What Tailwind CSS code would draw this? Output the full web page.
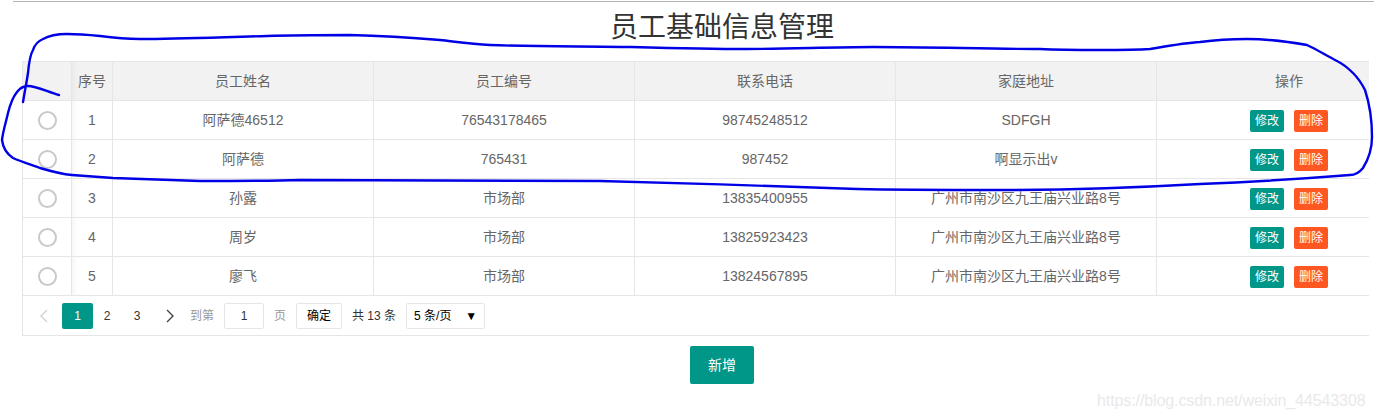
<!DOCTYPE html>
<html lang="zh-CN">
<head>
<meta charset="utf-8">
<title>员工基础信息管理</title>
<script src="https://cdn.jsdelivr.net/npm/@tailwindcss/browser@4"></script>
</head>
<body class="bg-white overflow-hidden font-['Liberation_Sans','Noto_Sans_CJK_SC',sans-serif] text-[14px] text-[#666]">
<div class="relative h-[419px] w-[1374px] overflow-hidden">
  <div class="w-[1444px]">
    <div class="mt-px ml-[13px] h-px bg-[#b4b4b4]"></div>
    <h1 class="h-[59px] pt-[8px] text-center text-[28px] leading-[36px] font-normal text-[#333]">员工基础信息管理</h1>

    <div class="ml-[22px] w-[1347px] border-l border-t border-[#e6e6e6]">
      <!-- head -->
      <div class="grid h-[39px] grid-cols-[49px_41px_261px_261px_261px_261px_212px] border-b border-[#e6e6e6] bg-[#f2f2f2]">
        <div class="border-r border-[#e6e6e6]"></div>
        <div class="flex items-center justify-center border-r border-[#e6e6e6] shadow-[inset_6px_0_6px_-5px_rgba(0,0,0,0.06)]">序号</div>
        <div class="flex items-center justify-center border-r border-[#e6e6e6]">员工姓名</div>
        <div class="flex items-center justify-center border-r border-[#e6e6e6]">员工编号</div>
        <div class="flex items-center justify-center border-r border-[#e6e6e6]">联系电话</div>
        <div class="flex items-center justify-center border-r border-[#e6e6e6]">家庭地址</div>
        <div class="flex items-center justify-center pl-[52px]">操作</div>
      </div>

      <!-- rows -->
      <div class="grid h-[39px] grid-cols-[49px_41px_261px_261px_261px_261px_212px] border-b border-[#e6e6e6]">
        <div class="flex items-center justify-center border-r border-[#e6e6e6] pt-px"><span class="size-[19px] rounded-full border-2 border-[#c9c9c9]"></span></div>
        <div class="flex items-center justify-center border-r border-[#e6e6e6] shadow-[inset_6px_0_6px_-5px_rgba(0,0,0,0.06)]">1</div>
        <div class="flex items-center justify-center border-r border-[#e6e6e6]">阿萨德46512</div>
        <div class="flex items-center justify-center border-r border-[#e6e6e6]">76543178465</div>
        <div class="flex items-center justify-center border-r border-[#e6e6e6]">98745248512</div>
        <div class="flex items-center justify-center border-r border-[#e6e6e6]">SDFGH</div>
        <div class="flex items-center gap-[10px] pl-[93px] pt-[2px]"><span class="flex h-[22px] w-[34px] items-center justify-center rounded-[2px] bg-[#009688] text-[12px] text-white">修改</span><span class="flex h-[22px] w-[34px] items-center justify-center rounded-[2px] bg-[#ff5722] text-[12px] text-white">删除</span></div>
      </div>
      <div class="grid h-[39px] grid-cols-[49px_41px_261px_261px_261px_261px_212px] border-b border-[#e6e6e6]">
        <div class="flex items-center justify-center border-r border-[#e6e6e6] pt-px"><span class="size-[19px] rounded-full border-2 border-[#c9c9c9]"></span></div>
        <div class="flex items-center justify-center border-r border-[#e6e6e6] shadow-[inset_6px_0_6px_-5px_rgba(0,0,0,0.06)]">2</div>
        <div class="flex items-center justify-center border-r border-[#e6e6e6]">阿萨德</div>
        <div class="flex items-center justify-center border-r border-[#e6e6e6]">765431</div>
        <div class="flex items-center justify-center border-r border-[#e6e6e6]">987452</div>
        <div class="flex items-center justify-center border-r border-[#e6e6e6]">啊显示出v</div>
        <div class="flex items-center gap-[10px] pl-[93px] pt-[2px]"><span class="flex h-[22px] w-[34px] items-center justify-center rounded-[2px] bg-[#009688] text-[12px] text-white">修改</span><span class="flex h-[22px] w-[34px] items-center justify-center rounded-[2px] bg-[#ff5722] text-[12px] text-white">删除</span></div>
      </div>
      <div class="grid h-[39px] grid-cols-[49px_41px_261px_261px_261px_261px_212px] border-b border-[#e6e6e6]">
        <div class="flex items-center justify-center border-r border-[#e6e6e6] pt-px"><span class="size-[19px] rounded-full border-2 border-[#c9c9c9]"></span></div>
        <div class="flex items-center justify-center border-r border-[#e6e6e6] shadow-[inset_6px_0_6px_-5px_rgba(0,0,0,0.06)]">3</div>
        <div class="flex items-center justify-center border-r border-[#e6e6e6]">孙露</div>
        <div class="flex items-center justify-center border-r border-[#e6e6e6]">市场部</div>
        <div class="flex items-center justify-center border-r border-[#e6e6e6]">13835400955</div>
        <div class="flex items-center justify-center border-r border-[#e6e6e6]">广州市南沙区九王庙兴业路8号</div>
        <div class="flex items-center gap-[10px] pl-[93px] pt-[2px]"><span class="flex h-[22px] w-[34px] items-center justify-center rounded-[2px] bg-[#009688] text-[12px] text-white">修改</span><span class="flex h-[22px] w-[34px] items-center justify-center rounded-[2px] bg-[#ff5722] text-[12px] text-white">删除</span></div>
      </div>
      <div class="grid h-[39px] grid-cols-[49px_41px_261px_261px_261px_261px_212px] border-b border-[#e6e6e6]">
        <div class="flex items-center justify-center border-r border-[#e6e6e6] pt-px"><span class="size-[19px] rounded-full border-2 border-[#c9c9c9]"></span></div>
        <div class="flex items-center justify-center border-r border-[#e6e6e6] shadow-[inset_6px_0_6px_-5px_rgba(0,0,0,0.06)]">4</div>
        <div class="flex items-center justify-center border-r border-[#e6e6e6]">周岁</div>
        <div class="flex items-center justify-center border-r border-[#e6e6e6]">市场部</div>
        <div class="flex items-center justify-center border-r border-[#e6e6e6]">13825923423</div>
        <div class="flex items-center justify-center border-r border-[#e6e6e6]">广州市南沙区九王庙兴业路8号</div>
        <div class="flex items-center gap-[10px] pl-[93px] pt-[2px]"><span class="flex h-[22px] w-[34px] items-center justify-center rounded-[2px] bg-[#009688] text-[12px] text-white">修改</span><span class="flex h-[22px] w-[34px] items-center justify-center rounded-[2px] bg-[#ff5722] text-[12px] text-white">删除</span></div>
      </div>
      <div class="grid h-[39px] grid-cols-[49px_41px_261px_261px_261px_261px_212px] border-b border-[#e6e6e6]">
        <div class="flex items-center justify-center border-r border-[#e6e6e6] pt-px"><span class="size-[19px] rounded-full border-2 border-[#c9c9c9]"></span></div>
        <div class="flex items-center justify-center border-r border-[#e6e6e6] shadow-[inset_6px_0_6px_-5px_rgba(0,0,0,0.06)]">5</div>
        <div class="flex items-center justify-center border-r border-[#e6e6e6]">廖飞</div>
        <div class="flex items-center justify-center border-r border-[#e6e6e6]">市场部</div>
        <div class="flex items-center justify-center border-r border-[#e6e6e6]">13824567895</div>
        <div class="flex items-center justify-center border-r border-[#e6e6e6]">广州市南沙区九王庙兴业路8号</div>
        <div class="flex items-center gap-[10px] pl-[93px] pt-[2px]"><span class="flex h-[22px] w-[34px] items-center justify-center rounded-[2px] bg-[#009688] text-[12px] text-white">修改</span><span class="flex h-[22px] w-[34px] items-center justify-center rounded-[2px] bg-[#ff5722] text-[12px] text-white">删除</span></div>
      </div>

      <!-- pager -->
      <div class="flex h-[40px] items-center border-b border-[#e6e6e6] pl-[15px] pt-px text-[12px] text-[#333]">
        <svg class="w-[12px] h-[14px] mr-[12px]" viewBox="0 0 12 14" fill="none" stroke="#d2d2d2" stroke-width="1.4"><path d="M9 1 3 7l6 6"/></svg>
        <span class="flex h-[26px] w-[31px] items-center justify-center rounded-[2px] bg-[#009688] text-white">1</span>
        <span class="flex h-[26px] w-[28px] items-center justify-center">2</span>
        <span class="flex h-[26px] w-[32px] items-center justify-center">3</span>
        <svg class="ml-[11px] w-[12px] h-[14px]" viewBox="0 0 12 14" fill="none" stroke="#444" stroke-width="1.4"><path d="M3 1l6 6-6 6"/></svg>
        <span class="ml-[14px] text-[#999]">到第</span>
        <span class="ml-[10px] flex h-[26px] w-[40px] items-center justify-center rounded-[2px] border border-[#e6e6e6]">1</span>
        <span class="ml-[10px] text-[#999]">页</span>
        <span class="ml-[10px] flex h-[26px] w-[46px] items-center justify-center rounded-[2px] border border-[#e6e6e6] text-black">确定</span>
        <span class="ml-[10px] whitespace-pre">共 13 条</span>
        <span class="ml-[10px] flex h-[26px] w-[79px] items-center justify-between rounded-[2px] border border-[#e6e6e6] pr-[7px] pl-[7px] text-black"><span>5 条/页</span><span class="text-[12px]">▼</span></span>
      </div>
    </div>

    <div class="mt-[10px] flex justify-center">
      <span class="flex h-[38px] w-[64px] items-center justify-center rounded-[2px] bg-[#009688] text-white">新增</span>
    </div>
  </div>

  <!-- hand drawn marker over the table -->
  <svg class="absolute top-0 left-0 pointer-events-none" width="1374" height="419" viewBox="0 0 1374 419" fill="none" stroke="#0000e6" stroke-width="2.4" stroke-linecap="round" stroke-linejoin="round">
    <path d="M23 102C25 90 27 80 28 73C29 62 30 55 33 50C35 44 38 41 43 39C50 35 58 34 67 34C80 34 90 35 100 36C115 38 125 39 140 39C180 39 225 37 267 36C295 35 325 35 350 35C385 36 415 38 440 40C458 42 472 44 490 45C540 47 590 46 631 47C670 48 710 49 746 49C790 49 830 47 873 47C930 47 990 49 1040 49C1060 50 1080 50 1100 50C1120 50 1135 50 1150 49C1168 46 1184 43 1200 42C1215 40 1230 39 1247 39C1265 39 1290 42 1307 45C1316 49 1327 56 1337 61C1343 64 1348 68 1353 73C1358 78 1362 84 1365 90C1370 105 1372 122 1372 137C1372 148 1368 160 1363 168C1359 173 1355 175 1350 175C1300 179 1250 182 1200 184C1130 188 1060 190 1000 190C950 190 900 190 857 189C780 186 680 183 600 181C500 180 400 180 300 180C270 181 235 181 200 181C170 180 140 179 113 178C98 177 85 176 72 175C60 174 50 171 40 168C32 165 22 162 13 158C7 154 3 148 2 140C3 131 6 122 8 113C10 105 13 97 17 92C20 88 24 86 28 86C36 86 48 92 59 95"/>
  </svg>

  <span class="absolute top-[392px] left-[1097px] text-[16px] leading-[18px] tracking-[-0.1px] text-[#e9e9e9] whitespace-nowrap">https://blog.csdn.net/weixin_44543308</span>
</div>
</body>
</html>
